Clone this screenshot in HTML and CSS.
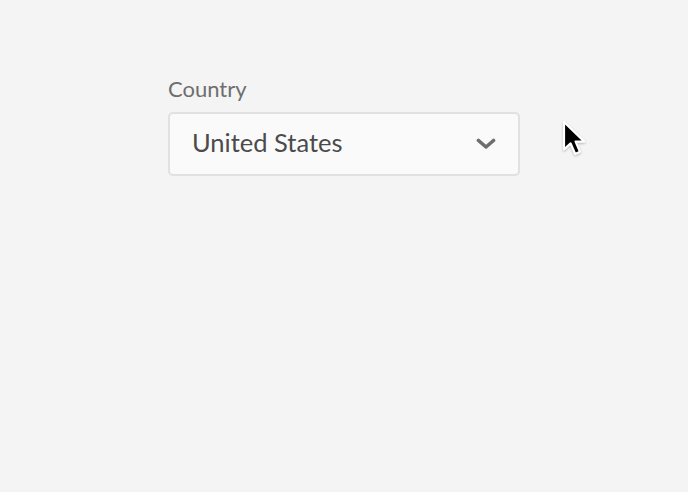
FILE: index.html
```html
<!DOCTYPE html>
<html>
<head>
<meta charset="utf-8">
<link rel="stylesheet" href="styles.css">
</head>
<body>
<div class="stage">
  <div class="field">
    <label class="label">Country</label>
    <div class="picker">
      <span class="value">United States</span>
      <svg class="chevron" width="20" height="12" viewBox="0 0 20 12"><path d="M2.5 2.5 L10 9 L17.5 2.5" fill="none" stroke="#6e6e6e" stroke-width="3.6" stroke-linecap="round" stroke-linejoin="round"/></svg>
    </div>
  </div>
  <svg class="cursor" width="27" height="38" viewBox="0 0 27 38"><path d="M2 2 L2 29.5 L8.6 23.4 L13.2 34 L18 31.8 L13.6 21.6 L22.4 21.6 Z" fill="#000" stroke="#fff" stroke-width="2.2" stroke-linejoin="round"/></svg>
</div>
</body>
</html>
```
FILE: styles.css
```css
html, body { margin: 0; padding: 0; }
body {
  background: #f4f4f4;
  width: 688px;
  height: 492px;
  overflow: hidden;
  font-family: "Lato", "Open Sans", sans-serif;
}
.stage {
  display: flex;
  align-items: flex-start;
  padding: 76px 0 0 168px;
  gap: 42px;
}
.field {
  display: flex;
  flex-direction: column;
  gap: 10px;
}
.label {
  font-size: 22px;
  line-height: 26px;
  color: #6e6e6e;
}
.picker {
  box-sizing: border-box;
  width: 352px;
  height: 64px;
  border: 2px solid #e1e1e1;
  border-radius: 5px;
  background: #fafafa;
  display: flex;
  align-items: center;
  justify-content: space-between;
  padding: 0 22px 0 22px;
}
.value {
  font-size: 25.5px;
  color: #4b4b4b;
  padding-bottom: 4px;
}
.chevron { display: block; }
.cursor {
  margin-top: 44px;
  filter: drop-shadow(0 1px 1px rgba(0,0,0,0.25));
}
```
